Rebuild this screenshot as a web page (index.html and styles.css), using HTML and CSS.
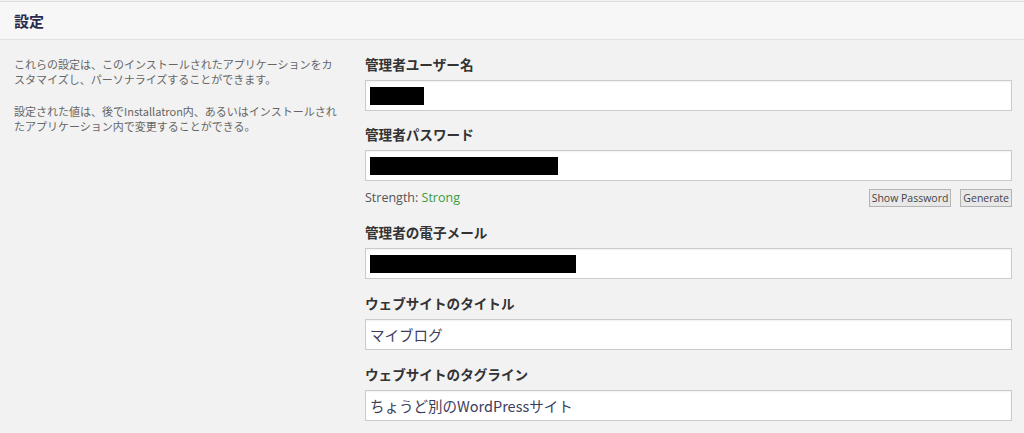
FILE: index.html
```html
<!DOCTYPE html>
<html lang="ja">
<head>
  <meta charset="UTF-8">
  <meta name="viewport" content="width=device-width, initial-scale=1.0">
  <title>設定</title>
  <link rel="stylesheet" href="styles.css">
</head>
<body>
  <div class="panel">
    <div class="panel-header">
      <h2>設定</h2>
    </div>
    <div class="panel-body">
      <div class="intro">
        <p>これらの設定は、このインストールされたアプリケーションをカスタマイズし、パーソナライズすることができます。</p>
        <p>設定された値は、後でInstallatron内、あるいはインストールされたアプリケーション内で変更することができる。</p>
      </div>
      <div class="fields">
        <div class="field">
          <label>管理者ユーザー名</label>
          <div class="input-box"><span class="redact redact-user"></span></div>
        </div>
        <div class="field field-pass">
          <label>管理者パスワード</label>
          <div class="input-box"><span class="redact redact-pass"></span></div>
          <div class="strength-row">
            <span class="strength">Strength: <span class="strong">Strong</span></span>
            <div class="pass-buttons">
              <button type="button" class="small-btn">Show Password</button>
              <button type="button" class="small-btn">Generate</button>
            </div>
          </div>
        </div>
        <div class="field">
          <label>管理者の電子メール</label>
          <div class="input-box"><span class="redact redact-mail"></span></div>
        </div>
        <div class="field">
          <label>ウェブサイトのタイトル</label>
          <div class="input-box">マイブログ</div>
        </div>
        <div class="field">
          <label>ウェブサイトのタグライン</label>
          <div class="input-box">ちょうど別のWordPressサイト</div>
        </div>
      </div>
    </div>
  </div>
</body>
</html>
```

FILE: styles.css
```css
body {
  margin: 0;
  padding: 0;
  background-color: #f2f2f2;
  font-family: "Noto Sans CJK JP", "Open Sans", sans-serif;
  color: #333;
}

.panel {
  border-top: 1px solid #dcdcdc;
  margin-top: 1px;
}

.panel-header {
  height: 37px;
  background-color: #f7f7f7;
  border-bottom: 1px solid #e2e2e2;
  display: flex;
  align-items: center;
  padding-left: 14px;
}

.panel-header h2 {
  margin: 0;
  font-size: 15px;
  font-weight: bold;
  color: #2a2c4e;
}

.panel-body {
  display: flex;
  padding: 14px 12px 0 14px;
}

.intro {
  width: 326px;
  margin-right: 25px;
  padding-top: 3px;
}

.intro p {
  margin: 0 0 17px 0;
  font-size: 11px;
  line-height: 15px;
  color: #666;
}

.fields {
  flex: 1;
}

.field {
  margin-bottom: 13px;
}

.field:nth-child(n+3) {
  margin-bottom: 14px;
}

.field-pass {
  margin-bottom: 15px;
}

.field label {
  display: block;
  font-size: 13.6px;
  font-weight: bold;
  line-height: 20px;
  margin-bottom: 6px;
  color: #333;
}

.input-box {
  box-sizing: border-box;
  height: 31px;
  background-color: #fff;
  border: 1px solid #cbcbcb;
  box-shadow: inset 0 1px 2px rgba(0, 0, 0, 0.06);
  padding: 0 4px;
  display: flex;
  align-items: center;
  font-size: 14.5px;
  color: #3c3d5c;
}

.redact {
  display: inline-block;
  height: 18px;
  background-color: #000;
}

.redact-user {
  width: 54px;
}

.redact-pass {
  width: 188px;
}

.redact-mail {
  width: 206px;
}

.strength-row {
  display: flex;
  justify-content: space-between;
  align-items: center;
  margin-top: 7px;
  height: 19px;
}

.strength {
  font-family: "Open Sans", sans-serif;
  font-size: 12.5px;
  color: #555;
}

.strong {
  color: #3d9a3d;
}

.pass-buttons {
  display: flex;
  gap: 9px;
}

.small-btn {
  font-family: "Open Sans", sans-serif;
  font-size: 10.5px;
  color: #444;
  background-color: #e8e8e8;
  border: 1px solid #b4b4b4;
  border-radius: 0;
  height: 18px;
  padding: 0 2px;
  line-height: 16px;
}
```
